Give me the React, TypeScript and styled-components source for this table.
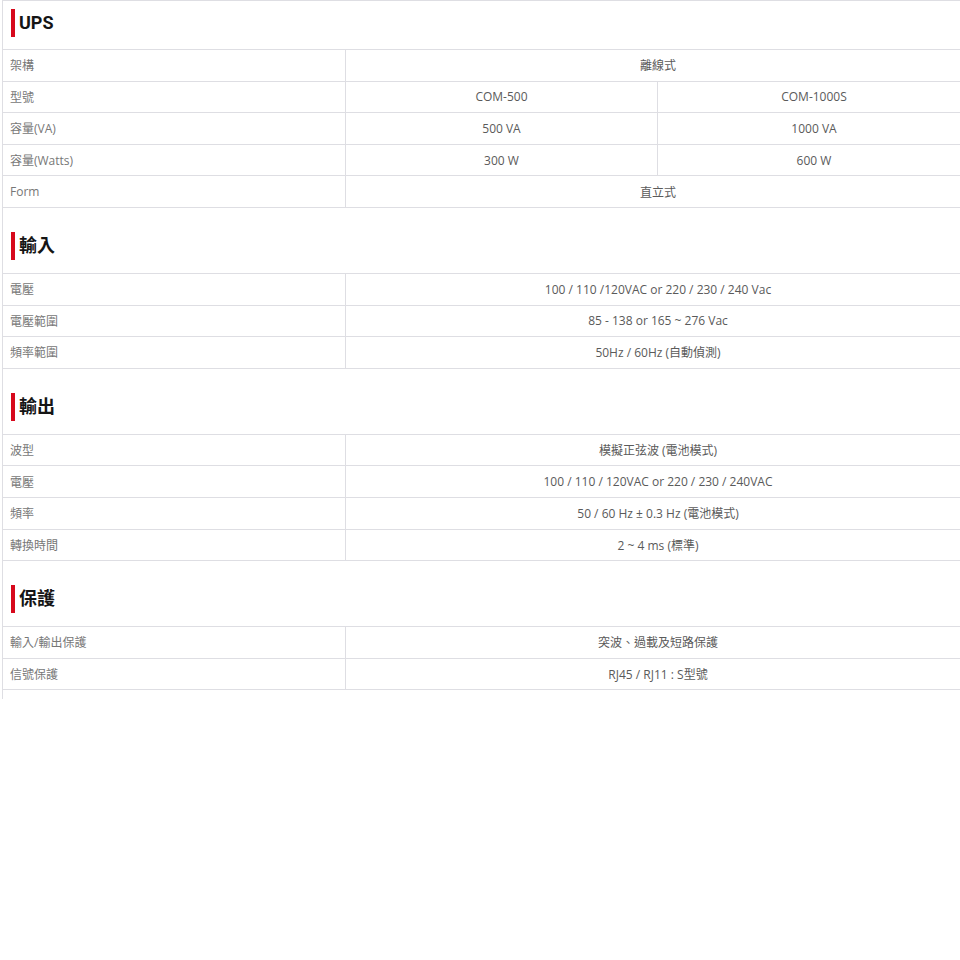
import React from "react";
import styled, { createGlobalStyle } from "styled-components";

const Global = createGlobalStyle`
  html, body { margin: 0; padding: 0; background: #fff; }
  body { font-family: "Open Sans", "Noto Sans CJK TC", sans-serif; }
`;

const Page = styled.div`
  width: 960px;
  overflow: hidden;
`;

const Sheet = styled.div`
  margin-left: 2px;
  width: 967px;
  border-left: 1px solid #dedee3;
  border-top: 1px solid #dedee3;
  padding-bottom: 9px;
`;

const Header = styled.div<{ $first?: boolean }>`
  display: flex;
  align-items: center;
  padding: ${(p) => (p.$first ? "8px" : "24px")} 0 ${(p) => (p.$first ? "12px" : "13px")} 8px;
  border-bottom: 1px solid #dedee3;
`;

const Bar = styled.span`
  width: 4px;
  height: 28px;
  background: #d7091c;
  margin-right: 4px;
`;

const Title = styled.h2`
  margin: 0;
  font-family: Roboto, "Noto Sans CJK TC", sans-serif;
  font-size: 18px;
  font-weight: 700;
  color: #151515;
  line-height: 28px;
`;

const Row = styled.div<{ $split?: boolean }>`
  display: grid;
  grid-template-columns: ${(p) => (p.$split ? "342px 312px 313px" : "342px 625px")};
  height: 31.6px;
  box-sizing: border-box;
  border-bottom: 1px solid #dedee3;
`;

const Label = styled.div`
  display: flex;
  align-items: center;
  padding-left: 7px;
  font-size: 12px;
  color: #777;
`;

const Value = styled.div`
  display: flex;
  align-items: center;
  justify-content: center;
  border-left: 1px solid #dedee3;
  font-size: 12px;
  color: #5a5a5a;
`;

type R = [string, ...string[]];
const sections: { title: string; rows: R[] }[] = [
  {
    title: "UPS",
    rows: [
      ["架構", "離線式"],
      ["型號", "COM-500", "COM-1000S"],
      ["容量(VA)", "500 VA", "1000 VA"],
      ["容量(Watts)", "300 W", "600 W"],
      ["Form", "直立式"],
    ],
  },
  {
    title: "輸入",
    rows: [
      ["電壓", "100 / 110 /120VAC or 220 / 230 / 240 Vac"],
      ["電壓範圍", "85 - 138 or 165 ~ 276 Vac"],
      ["頻率範圍", "50Hz / 60Hz (自動偵測)"],
    ],
  },
  {
    title: "輸出",
    rows: [
      ["波型", "模擬正弦波 (電池模式)"],
      ["電壓", "100 / 110 / 120VAC or 220 / 230 / 240VAC"],
      ["頻率", "50 / 60 Hz ± 0.3 Hz (電池模式)"],
      ["轉換時間", "2 ~ 4 ms (標準)"],
    ],
  },
  {
    title: "保護",
    rows: [
      ["輸入/輸出保護", "突波、過載及短路保護"],
      ["信號保護", "RJ45 / RJ11 : S型號"],
    ],
  },
];

export default function App() {
  return (
    <Page>
      <Global />
      <Sheet>
        {sections.map((s, i) => (
          <React.Fragment key={s.title}>
            <Header $first={i === 0}>
              <Bar />
              <Title>{s.title}</Title>
            </Header>
            {s.rows.map(([label, ...vals]) => (
              <Row key={label + vals[0]} $split={vals.length > 1}>
                <Label>{label}</Label>
                {vals.map((v) => (
                  <Value key={v}>{v}</Value>
                ))}
              </Row>
            ))}
          </React.Fragment>
        ))}
      </Sheet>
    </Page>
  );
}
